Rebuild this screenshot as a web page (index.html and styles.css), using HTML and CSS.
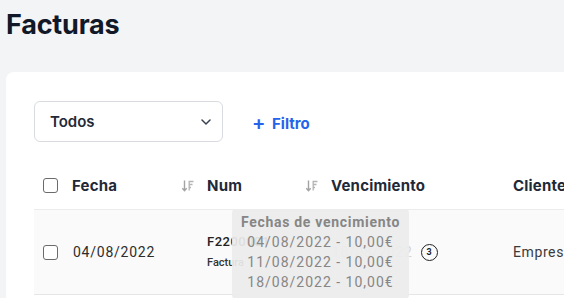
FILE: index.html
```html
<!DOCTYPE html>
<html lang="es">
<head>
<meta charset="utf-8">
<title>Facturas</title>
<link rel="stylesheet" href="styles.css">
</head>
<body>
<div class="page">
  <h1 class="title">Facturas</h1>
  <div class="card">
    <div class="toolbar">
      <div class="select">
        <span class="select-label">Todos</span>
        <svg class="chevron" width="10" height="6" viewBox="0 0 10 6"><path d="M1 1l4 4 4-4" fill="none" stroke="#374151" stroke-width="1.5" stroke-linecap="round" stroke-linejoin="round"/></svg>
      </div>
      <button class="add-filter"><span class="plus">+</span> Filtro</button>
    </div>
    <div class="table">
      <div class="row head">
        <div class="cell c1"><span class="checkbox"></span><span class="th">Fecha</span></div>
        <div class="cell c2"><svg class="sort" width="14" height="14" viewBox="0 0 14 14"><path d="M3.5 1.5v10M1.3 9.3l2.2 2.4 2.2-2.4" fill="none" stroke="#a3a3a3" stroke-width="1.4"/><path d="M7.5 2.5h5M7.5 5.5h4M7.5 8.5h2.5M8.2 2.5v9" fill="none" stroke="#b5b5b5" stroke-width="1.3"/></svg><span class="th">Num</span></div>
        <div class="cell c3"><svg class="sort" width="14" height="14" viewBox="0 0 14 14"><path d="M3.5 1.5v10M1.3 9.3l2.2 2.4 2.2-2.4" fill="none" stroke="#a3a3a3" stroke-width="1.4"/><path d="M7.5 2.5h5M7.5 5.5h4M7.5 8.5h2.5M8.2 2.5v9" fill="none" stroke="#b5b5b5" stroke-width="1.3"/></svg><span class="th">Vencimiento</span></div>
        <div class="cell c4"><span class="th">Cliente</span></div>
      </div>
      <div class="row data">
        <div class="cell c1"><span class="checkbox"></span><span class="td">04/08/2022</span></div>
        <div class="cell c2 num">
          <span class="num-main">F2200001</span>
          <span class="num-sub">Factura</span>
        </div>
        <div class="cell c3 due"><span class="due-date">18/08/2022</span><span class="count">3</span></div>
        <div class="cell c4"><span class="td">Empresa</span></div>
        <div class="tooltip">
          <div class="tip-title">Fechas de vencimiento</div>
          <div class="tip-line">04/08/2022 - 10,00€</div>
          <div class="tip-line">11/08/2022 - 10,00€</div>
          <div class="tip-line">18/08/2022 - 10,00€</div>
        </div>
      </div>
    </div>
  </div>
</div>
</body>
</html>
```

FILE: styles.css
```css
* { box-sizing: border-box; }
html, body {
  margin: 0;
  width: 564px;
  height: 298px;
  overflow: hidden;
  background: #f3f4f6;
}
.page {
  padding: 9px 0 0 6px;
  font-family: Inter, "Noto Sans", sans-serif;
  color: #1f2937;
}
.title {
  margin: 0;
  font-size: 27px;
  line-height: 32px;
  font-weight: 700;
  color: #111827;
  letter-spacing: -0.2px;
}
.card {
  margin-top: 31px;
  background: #fff;
  border-top-left-radius: 8px;
  padding: 29px 0 0 28px;
  width: 640px;
  height: 240px;
}
.toolbar {
  display: flex;
  align-items: center;
  gap: 29px;
}
.select {
  width: 189px;
  height: 41px;
  border: 1px solid #d8dbe0;
  border-radius: 6px;
  display: flex;
  align-items: center;
  justify-content: space-between;
  padding: 0 11px 0 15px;
}
.select-label {
  font-size: 15px;
  font-weight: 600;
  color: #1f2937;
}
.add-filter {
  border: 0;
  background: none;
  padding: 0;
  font-family: Inter, "Noto Sans", sans-serif;
  font-size: 15px;
  font-weight: 700;
  color: #2563eb;
}
.plus {
  font-size: 20px;
  font-weight: 600;
  margin-right: 3px;
  position: relative;
  top: 1px;
}
.table {
  margin-top: 20px;
  width: 620px;
}
.row {
  display: grid;
  grid-template-columns: 138px 124px 216px 142px;
  align-items: center;
}
.row.head {
  height: 47px;
}
.row.data {
  position: relative;
  height: 86px;
  background: #fafafa;
  border-top: 1px solid #ececec;
  border-bottom: 1px solid #e6e6e6;
}
.cell {
  display: flex;
  align-items: center;
}
.c1 { padding-left: 9px; }
.c2, .c3 { padding-left: 9px; }
.checkbox {
  width: 15px;
  height: 15px;
  border: 1.5px solid #6b6b6b;
  border-radius: 3px;
  background: #fff;
  flex: none;
}
.head .checkbox { margin-right: 14px; }
.data .checkbox { margin-right: 15px; }
.th {
  font-size: 15px;
  font-weight: 700;
  color: #1f2937;
  letter-spacing: 0.2px;
}
.sort {
  flex: none;
  margin-right: 12px;
}
.td {
  font-family: Roboto, sans-serif;
  font-size: 14px;
  letter-spacing: 0.6px;
  color: #2d2d2d;
}
.data .c1 .td { letter-spacing: 0.75px; }
.num {
  flex-direction: column;
  align-items: flex-start;
  padding-left: 35px;
  gap: 7px;
  margin-top: -2px;
}
.num-main {
  font-family: Roboto, sans-serif;
  font-size: 13px;
  font-weight: 500;
  color: #222;
  letter-spacing: 0.5px;
}
.num-sub {
  font-family: Roboto, sans-serif;
  font-size: 11px;
  font-weight: 500;
  color: #333;
}
.due {
  padding-left: 36px;
}
.due-date {
  font-family: Roboto, sans-serif;
  font-size: 14px;
  letter-spacing: 0.6px;
  color: #d6d6d6;
}
.count {
  margin-left: 8px;
  width: 17px;
  height: 17px;
  border: 1.5px solid #222;
  border-radius: 50%;
  font-family: Roboto, sans-serif;
  font-size: 9px;
  font-weight: 700;
  color: #222;
  display: flex;
  align-items: center;
  justify-content: center;
}
.c4 { padding-left: 1px; }
.c4 .td { color: #3a3a3a; }
.tooltip {
  position: absolute;
  left: 198px;
  top: -1px;
  width: 177px;
  height: 90px;
  background: rgba(236, 236, 236, 0.93);
  border-radius: 4px;
  padding-top: 3px;
  text-align: center;
  font-family: Roboto, sans-serif;
  color: #868686;
}
.tip-title {
  font-size: 14px;
  font-weight: 700;
  letter-spacing: 0.7px;
  line-height: 20px;
}
.tip-line {
  font-size: 14px;
  letter-spacing: 1px;
  line-height: 20px;
}
```
